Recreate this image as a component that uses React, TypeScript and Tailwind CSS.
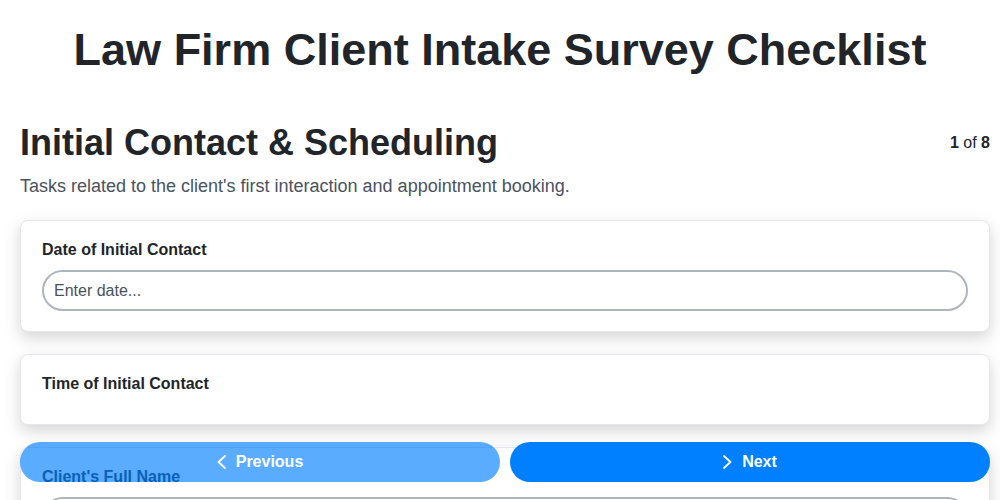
import React from "react";

const ChevronLeftMark = () => (
  <svg width="9" height="14" viewBox="0 0 9 14" fill="none" aria-hidden="true">
    <polyline points="8,1 1.5,7 8,13" stroke="white" strokeWidth="1.8" strokeLinecap="round" strokeLinejoin="round" />
  </svg>
);

const ChevronRightMark = () => (
  <svg width="9" height="14" viewBox="0 0 9 14" fill="none" aria-hidden="true">
    <polyline points="1,1 7.5,7 1,13" stroke="white" strokeWidth="1.8" strokeLinecap="round" strokeLinejoin="round" />
  </svg>
);

interface Question {
  id: number;
  label: string;
  placeholder?: string;
}

const questions: Question[] = [
  { id: 0, label: "Date of Initial Contact", placeholder: "Enter date..." },
  { id: 1, label: "Time of Initial Contact" },
  { id: 2, label: "Client's Full Name", placeholder: "Enter name..." },
  { id: 3, label: "Client's Phone Number", placeholder: "Enter phone..." },
];

const QuestionCard: React.FC<{ question: Question }> = ({ question }) => (
  <div className="rounded-lg border border-[#e6e6ec] bg-white px-[21px] py-5 shadow-[0_6px_16px_rgba(0,0,0,0.17)]">
    <label className="mb-3 block text-base font-bold leading-[17px] text-[#212529]">
      {question.label}
    </label>
    {question.placeholder && (
      <input
        type="text"
        placeholder={question.placeholder}
        className="block h-[41px] w-full rounded-full border-2 border-[#adb5bd] bg-white px-[10px] text-base text-[#212529] outline-none placeholder:text-[#4a5260]"
      />
    )}
  </div>
);

export default function App() {
  return (
    <div className="min-h-screen bg-white pb-24 font-['Liberation_Sans',Arial,sans-serif] text-[#212529]">
      <h1 className="pt-[23px] text-center text-[45px] font-bold leading-[54px]">
        Law Firm Client Intake Survey Checklist
      </h1>

      <div className="pl-5 pr-[10px] pt-[44px]">
        <div className="flex items-center justify-between">
          <h2 className="text-[36px] font-bold leading-[43px]">Initial Contact &amp; Scheduling</h2>
          <div className="text-base">
            <span className="font-bold">1</span> of <span className="font-bold">8</span>
          </div>
        </div>
        <p className="mt-[9px] text-lg leading-[27px] text-[#4a5260]">
          Tasks related to the client's first interaction and appointment booking.
        </p>

        <div className="mt-5 flex flex-col gap-[22px]">
          {questions.map((q) => (
            <QuestionCard key={q.id} question={q} />
          ))}
        </div>
      </div>

      <div className="fixed bottom-[18px] left-5 right-[10px] z-10 flex gap-[10px]">
        <button
          disabled
          className="flex h-10 flex-1 items-center justify-center gap-[10px] rounded-full bg-[#0080ff] text-base font-bold text-white opacity-[0.65]"
        >
          <ChevronLeftMark />
          Previous
        </button>
        <button className="flex h-10 flex-1 items-center justify-center gap-[10px] rounded-full bg-[#0080ff] text-base font-bold text-white">
          <ChevronRightMark />
          Next
        </button>
      </div>
    </div>
  );
}
